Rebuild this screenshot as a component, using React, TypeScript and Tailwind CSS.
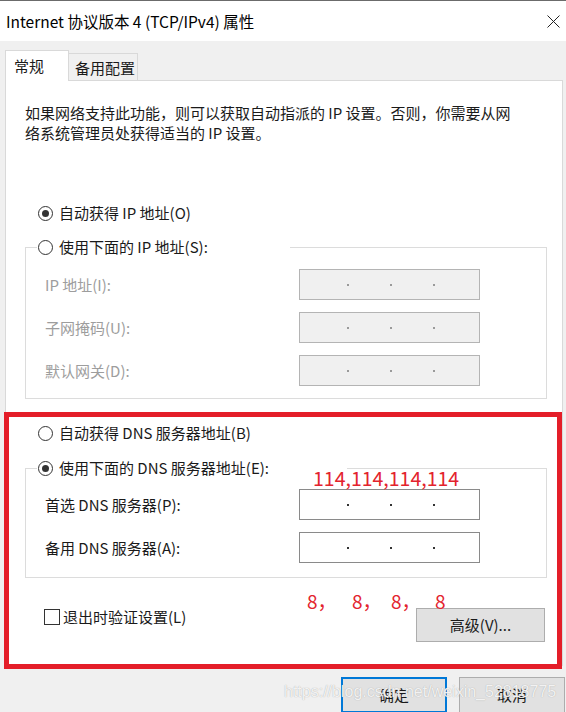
import React from "react";

function Radio({ checked }: { checked?: boolean }) {
  return (
    <span className="flex h-[15px] w-[15px] shrink-0 items-center justify-center rounded-full border border-[#333333] bg-white">
      {checked && <span className="h-[7px] w-[7px] rounded-full bg-[#333333]" />}
    </span>
  );
}

function IpBox({ disabled }: { disabled?: boolean }) {
  return (
    <div
      className={
        disabled
          ? "flex h-[31px] w-[181px] items-center gap-[41px] border border-[#b4b4b4] bg-[#f0f0f0] pl-[47px]"
          : "flex h-[31px] w-[181px] items-center gap-[41px] border border-[#8a8a8a] bg-white pl-[47px]"
      }
    >
      {[0, 1, 2].map((i) => (
        <span
          key={i}
          className={disabled ? "h-[2px] w-[2px] bg-[#9a9a9a]" : "h-[2px] w-[2px] bg-[#333333]"}
        />
      ))}
    </div>
  );
}

function FieldRow({ label, disabled }: { label: string; disabled?: boolean }) {
  return (
    <div className="flex items-center">
      <span className={disabled ? "w-[254px] text-[#9d9d9d]" : "w-[254px] text-[#1a1a1a]"}>{label}</span>
      <IpBox disabled={disabled} />
    </div>
  );
}

export default function App() {
  return (
    <div className="relative h-[712px] w-[566px] overflow-hidden bg-[#f0f0f0] font-['Noto_Sans_CJK_SC',sans-serif] text-[15px] leading-[20px] text-[#1a1a1a]">
      {/* window edge */}
      <div className="h-px bg-[#6b6b6b]" />

      {/* Title bar */}
      <div className="flex h-[40px] items-center justify-between bg-white pl-[6px] pr-[6px]">
        <span className="text-[15.5px] text-black">Internet 协议版本 4 (TCP/IPv4) 属性</span>
        <svg className="h-[13px] w-[13px]" viewBox="0 0 13 13" fill="none" stroke="#222" strokeWidth={1}>
          <path d="M0.5 0.5L12.5 12.5M12.5 0.5L0.5 12.5" />
        </svg>
      </div>

      {/* Tabs */}
      <div className="flex items-end px-[5px] pt-[9px]">
        <div className="relative z-10 -mb-px h-[31px] w-[64px] border-l border-r border-t border-[#d9d9d9] bg-white pl-[8px] pt-[5px]">
          常规
        </div>
        <div className="h-[27px] w-[69px] border-r border-t border-[#d9d9d9] bg-[#f0f0f0] pl-[6px] pt-[4px]">
          备用配置
        </div>
      </div>

      {/* Panel */}
      <div className="mx-[5px] flex h-[586px] w-[558px] flex-col border border-[#d9d9d9] bg-white">
        <p className="ml-[19px] mt-[22px]">
          如果网络支持此功能，则可以获取自动指派的 IP 设置。否则，你需要从网
          <br />
          络系统管理员处获得适当的 IP 设置。
        </p>

        <div className="ml-[32px] mt-[60px] flex h-[20px] items-center gap-[6px]">
          <Radio checked />
          <span>自动获得 IP 地址(O)</span>
        </div>

        <fieldset className="ml-[19px] mt-[14px] w-[522px] border border-[#dcdcdc] pb-[12px] pl-[11px]">
          <legend>
            <div className="flex h-[20px] w-[253px] items-center gap-[6px] pl-px">
              <Radio />
              <span>使用下面的 IP 地址(S):</span>
            </div>
          </legend>
          <div className="flex flex-col gap-[12px] pl-[8px] pt-[12px]">
            <FieldRow label="IP 地址(I):" disabled />
            <FieldRow label="子网掩码(U):" disabled />
            <FieldRow label="默认网关(D):" disabled />
          </div>
        </fieldset>

        <div className="ml-[32px] mt-[24px] flex h-[20px] items-center gap-[6px]">
          <Radio />
          <span>自动获得 DNS 服务器地址(B)</span>
        </div>

        <fieldset className="ml-[19px] mt-[15px] w-[522px] border border-[#dcdcdc] pb-[14px] pl-[11px]">
          <legend>
            <div className="flex h-[20px] w-[310px] items-center gap-[6px] pl-px">
              <Radio checked />
              <span>使用下面的 DNS 服务器地址(E):</span>
            </div>
          </legend>
          <div className="flex flex-col gap-[12px] pl-[8px] pt-[11px]">
            <FieldRow label="首选 DNS 服务器(P):" />
            <FieldRow label="备用 DNS 服务器(A):" />
          </div>
        </fieldset>

        <div className="mt-[29px] flex items-start justify-between pl-[38px] pr-[17px]">
          <div className="flex h-[20px] items-center gap-[3px]">
            <span className="h-[16px] w-[16px] border border-[#333333] bg-white" />
            <span>退出时验证设置(L)</span>
          </div>
          <button className="mt-px flex h-[34px] w-[129px] items-center justify-center border border-[#adadad] bg-[#e1e1e1]">
            高级(V)...
          </button>
        </div>
      </div>

      {/* Dialog buttons */}
      <div className="mt-[11px] flex justify-end gap-[12px] pr-px">
        <button className="flex h-[36px] w-[106px] items-center justify-center border-2 border-[#0078d7] bg-[#e1e1e1]">
          确定
        </button>
        <button className="flex h-[36px] w-[106px] items-center justify-center border border-[#adadad] bg-[#e1e1e1]">
          取消
        </button>
      </div>

      {/* Annotations */}
      <div className="absolute left-[313px] top-[466px] text-[19.5px] leading-[24px] text-[#e3232d]">
        114,114,114,114
      </div>
      <div className="absolute left-[307px] top-[589px] flex text-[19px] leading-[24px] text-[#e3232d]">
        <span className="w-[45px]">8，</span>
        <span className="w-[39px]">8，</span>
        <span className="w-[44px]">8，</span>
        <span>8</span>
      </div>
      <div className="absolute left-[4px] top-[412px] h-[257px] w-[558px] border-[5px] border-[#e41e29]" />
      <div className="absolute left-[284px] top-[682px] font-['Liberation_Sans',sans-serif] text-[16px] leading-[20px] text-white/85 [text-shadow:0_0_1px_#9a9a9a]">
        https://blog.csdn.net/weixin_52818775
      </div>
    </div>
  );
}
